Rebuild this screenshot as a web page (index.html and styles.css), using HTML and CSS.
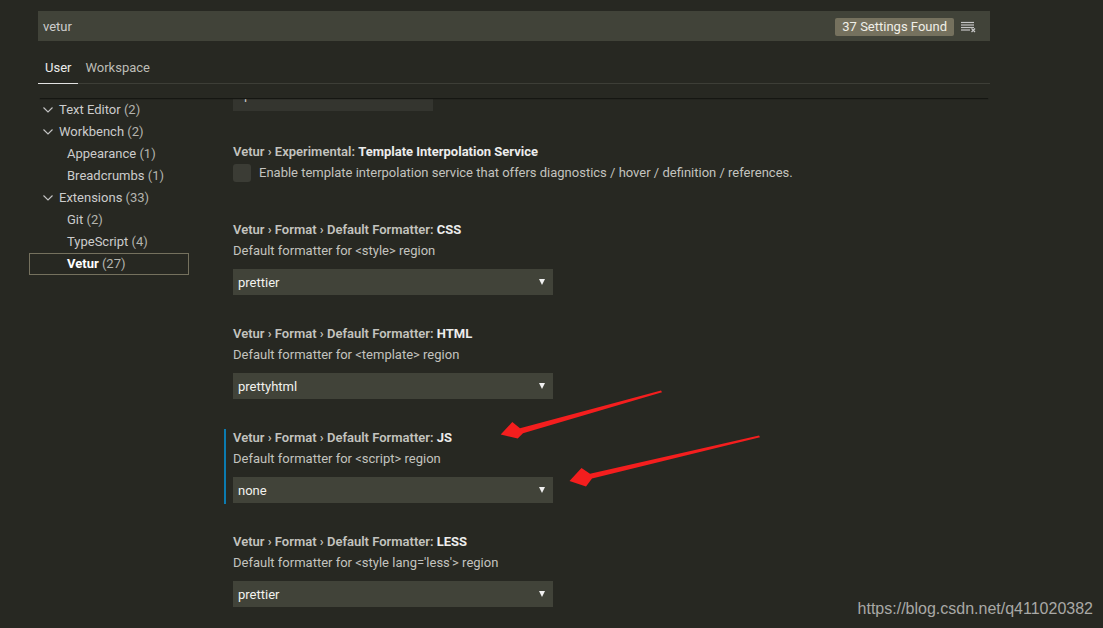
FILE: index.html
```html
<!DOCTYPE html>
<html>
<head>
<meta charset="utf-8">
<link rel="stylesheet" href="styles.css">
</head>
<body>
<div class="page">
  <header class="header">
    <div class="search">
      <span class="query">vetur</span>
      <span class="badge">37 Settings Found</span>
      <svg class="clear" width="16" height="12" viewBox="0 0 16 12">
        <g stroke="#c5c5c5" stroke-width="1.2" fill="none">
          <line x1="0" y1="1.5" x2="13" y2="1.5"/>
          <line x1="0" y1="4" x2="13" y2="4"/>
          <line x1="0" y1="6.5" x2="13" y2="6.5"/>
          <line x1="0" y1="9" x2="9" y2="9"/>
          <line x1="10.5" y1="7.5" x2="14" y2="11"/>
          <line x1="14" y1="7.5" x2="10.5" y2="11"/>
        </g>
      </svg>
    </div>
    <nav class="tabs">
      <span class="tab active">User</span>
      <span class="tab">Workspace</span>
    </nav>
  </header>
  <div class="body">
    <ul class="toc">
      <li class="row l1"><svg class="chev" width="10" height="6" viewBox="0 0 10 6"><path d="M0.5 0.5 L5 5 L9.5 0.5" stroke="#c5c5c5" stroke-width="1.1" fill="none"/></svg><span class="label">Text Editor <span class="count">(2)</span></span></li>
      <li class="row l1"><svg class="chev" width="10" height="6" viewBox="0 0 10 6"><path d="M0.5 0.5 L5 5 L9.5 0.5" stroke="#c5c5c5" stroke-width="1.1" fill="none"/></svg><span class="label">Workbench <span class="count">(2)</span></span></li>
      <li class="row l2"><span class="label">Appearance <span class="count">(1)</span></span></li>
      <li class="row l2"><span class="label">Breadcrumbs <span class="count">(1)</span></span></li>
      <li class="row l1"><svg class="chev" width="10" height="6" viewBox="0 0 10 6"><path d="M0.5 0.5 L5 5 L9.5 0.5" stroke="#c5c5c5" stroke-width="1.1" fill="none"/></svg><span class="label">Extensions <span class="count">(33)</span></span></li>
      <li class="row l2"><span class="label">Git <span class="count">(2)</span></span></li>
      <li class="row l2"><span class="label">TypeScript <span class="count">(4)</span></span></li>
      <li class="row l2 selected"><span class="label"><b>Vetur</b> <span class="count">(27)</span></span></li>
    </ul>
    <div class="list">
      <div class="prev-input">-1</div>
      <div class="item bool">
        <div class="title"><span class="cat">Vetur › Experimental: </span><span class="key">Template Interpolation Service</span></div>
        <div class="check-row"><span class="checkbox"></span><span class="desc">Enable template interpolation service that offers diagnostics / hover / definition / references.</span></div>
      </div>
      <div class="item">
        <div class="title"><span class="cat">Vetur › Format › Default Formatter: </span><span class="key">CSS</span></div>
        <div class="desc">Default formatter for &lt;style&gt; region</div>
        <div class="select">prettier<span class="arrow"></span></div>
      </div>
      <div class="item">
        <div class="title"><span class="cat">Vetur › Format › Default Formatter: </span><span class="key">HTML</span></div>
        <div class="desc">Default formatter for &lt;template&gt; region</div>
        <div class="select">prettyhtml<span class="arrow"></span></div>
      </div>
      <div class="item focused">
        <div class="title"><span class="cat">Vetur › Format › Default Formatter: </span><span class="key">JS</span></div>
        <div class="desc">Default formatter for &lt;script&gt; region</div>
        <div class="select">none<span class="arrow"></span></div>
      </div>
      <div class="item">
        <div class="title"><span class="cat">Vetur › Format › Default Formatter: </span><span class="key">LESS</span></div>
        <div class="desc">Default formatter for &lt;style lang='less'&gt; region</div>
        <div class="select">prettier<span class="arrow"></span></div>
      </div>
    </div>
  </div>
  <svg class="arrows" width="1103" height="628" viewBox="0 0 1103 628">
    <polygon fill="#f41e1e" points="661,390.5 662,392.3 523,433.3 517.7,438.5 500.7,434.5 512.3,422 520,428.3"/>
    <polygon fill="#f41e1e" points="759,435.5 760,437.3 592,478.5 586,486.5 569.5,481 581.5,468 590,473.8"/>
  </svg>
  <div class="watermark">https://blog.csdn.net/q411020382</div>
</div>
</body>
</html>
```
FILE: styles.css
```css
* { box-sizing: border-box; }
html, body { margin: 0; padding: 0; }
body {
  background: #272822;
  color: #cccccc;
  font-family: Roboto, "Liberation Sans", sans-serif;
  font-size: 13px;
  width: 1103px;
  height: 628px;
  overflow: hidden;
}
.page { position: relative; width: 1103px; height: 628px; padding-top: 11px; }

.header {
  position: relative;
  z-index: 1;
  margin-left: 38px;
  width: 952px;
  height: 87px;
  box-shadow: 0 3px 1px -2px #151612;
}
.search {
  height: 30px;
  background: #414339;
  display: flex;
  align-items: center;
  padding: 1px 13px 0 5px;
}
.query { flex: 1; color: #cccccc; }
.badge {
  background: #75715e;
  color: #f0efe8;
  height: 18px;
  line-height: 18px;
  padding: 0 7px;
  border-radius: 2px;
  margin-right: 7px;
}
.clear { display: block; margin-top: 1px; }

.tabs {
  margin-top: 13px;
  height: 30px;
  display: flex;
  border-bottom: 1px solid #3d3e37;
}
.tab {
  padding: 0 7px;
  line-height: 27px;
  color: #bdbdb6;
}
.tab.active {
  color: #ececec;
  border-bottom: 1px solid #e2e2e2;
  margin-bottom: -1px;
}

.body { display: flex; }
.toc {
  list-style: none;
  margin: 1px 0 0 29px;
  padding: 0;
  width: 160px;
}
.row {
  height: 22px;
  line-height: 20px;
  display: flex;
  align-items: center;
  color: #cccccc;
  border: 1px solid transparent;
}
.label { white-space: pre; }
.row.l1 { padding-left: 13px; }
.row.l2 { padding-left: 37px; }
.chev { margin-right: 6px; flex: none; }
.count { color: #b4b4ae; }
.row.selected { border-color: #75715e; }
.row.selected b { color: #ffffff; font-weight: 700; }

.list {
  margin-left: 35px;
  height: 530px;
  overflow: hidden;
}
.prev-input {
  margin-left: 9px;
  width: 200px;
  height: 26px;
  margin-top: -13px;
  background: #34352f;
  color: #cccccc;
  padding: 3px 0 0 5px;
  line-height: 20px;
}
.item {
  border-left: 2px solid transparent;
  padding-left: 7px;
  padding-bottom: 1px;
  margin-bottom: 29px;
}
.item.focused { border-left-color: #0b7bb0; }
.item.bool { margin-top: 32px; margin-bottom: 39px; padding-bottom: 0; }
.title { line-height: 18px; height: 18px; white-space: nowrap; }
.cat { color: #c3c3bf; font-weight: 600; }
.key { color: #ececec; font-weight: 700; }
.desc { color: #c3c3bf; line-height: 18px; margin-top: 3px; white-space: nowrap; }
.check-row { display: flex; align-items: center; margin-top: 3px; height: 18px; }
.check-row .desc { margin-top: 0; margin-left: 8px; }
.checkbox {
  width: 18px;
  height: 18px;
  border-radius: 3px;
  background: #3b3c35;
  flex: none;
}
.select {
  margin-top: 9px;
  width: 320px;
  height: 26px;
  background: #414339;
  color: #f2f2ee;
  padding-left: 5px;
  display: flex;
  align-items: center;
  justify-content: space-between;
  padding-right: 8px;
}
.arrow {
  width: 0;
  height: 0;
  border-left: 3.5px solid transparent;
  border-right: 3.5px solid transparent;
  border-top: 6px solid #f0f0f0;
  margin-top: -1px;
}

.arrows { position: absolute; left: 0; top: 0; pointer-events: none; z-index: 2; }
.watermark {
  position: absolute;
  right: 10px;
  bottom: 10px;
  font-family: "Liberation Sans", Arial, sans-serif;
  font-size: 16px;
  color: #a9a9a6;
  z-index: 2;
}
```
